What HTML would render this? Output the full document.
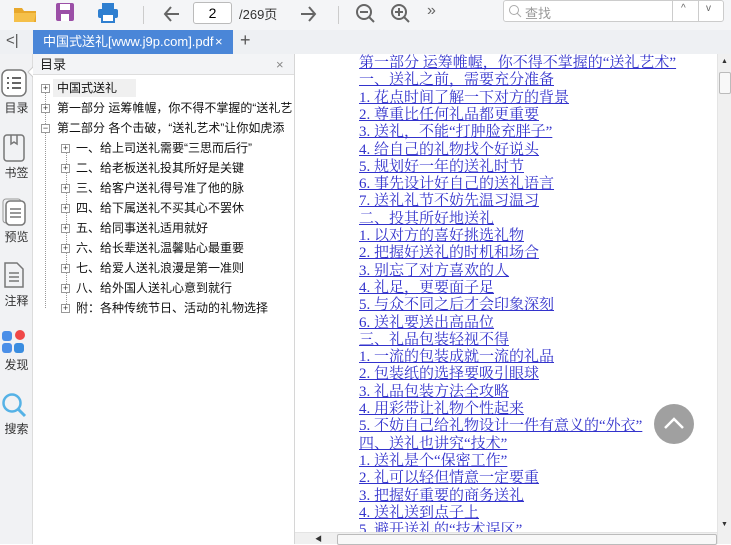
<!DOCTYPE html>
<html><head><meta charset="utf-8"><style>
*{margin:0;padding:0;box-sizing:border-box}
body{width:731px;height:544px;overflow:hidden;background:#fff;font-family:"Liberation Sans","Noto Sans CJK SC",sans-serif;position:relative}
.abs{position:absolute}
#tb{left:0;top:0;width:731px;height:30px;background:#f4f5f7}
#tabs{left:0;top:30px;width:731px;height:24px;background:#eef0f3}
#tab{left:33px;top:30px;width:200px;height:24px;background:#4a86d8;color:#fff;font-size:13px;line-height:24px;padding-left:10px}
#icons{left:0;top:54px;width:33px;height:490px;background:#f1f2f4;border-right:1px solid #dcdcdc}
#side{left:33px;top:54px;width:262px;height:490px;background:#fff;border-right:1px solid #d6d6d6}
#sidehdr{left:0;top:0;width:261px;height:21px;background:#f3f4f6;border-bottom:1px solid #ddd;font-size:13px;line-height:21px;padding-left:7px;color:#222}
.it{position:absolute;font-size:12px;color:#111;white-space:nowrap;line-height:16px}
.pm{position:absolute;width:9px;height:9px;border:1px solid #999;background:#fff;font-size:9px;line-height:7px;text-align:center;color:#333}
#content{left:295px;top:54px;width:422px;height:478px;background:#fff;overflow:hidden}
.ln{position:absolute;left:64px;font-family:"Liberation Serif","Noto Serif CJK SC",serif;font-size:15px;color:#3333cc;text-decoration:underline;white-space:nowrap;line-height:17px}
.lbl{position:absolute;left:0;width:33px;text-align:center;font-size:12px;color:#333}
</style></head><body>
<div id="tb" class="abs">
 <svg class="abs" style="left:12px;top:2px" width="26" height="22"><path d="M2 6h8l2 3h12v11H2z" fill="#e8a82c"/><path d="M2 11h22l-2 9H2z" fill="#f5c04a"/></svg>
 <svg class="abs" style="left:55px;top:2px" width="20" height="20"><rect x="1" y="1" width="18" height="18" rx="2" fill="#9b4fa7"/><rect x="5" y="2" width="10" height="6" fill="#fff"/><rect x="6" y="12" width="8" height="7" fill="#fff"/></svg>
 <svg class="abs" style="left:96px;top:2px" width="24" height="22"><rect x="6" y="1" width="12" height="6" fill="#2f7fd0"/><rect x="2" y="7" width="20" height="9" rx="2" fill="#2f7fd0"/><rect x="6" y="12" width="12" height="8" fill="#fff" stroke="#2f7fd0" stroke-width="2"/></svg>
 <div class="abs" style="left:143px;top:6px;width:1px;height:18px;background:#ccc"></div>
 <svg class="abs" style="left:162px;top:4px" width="20" height="20"><path d="M17 10H3M9 3L3 10l6 7" stroke="#666" stroke-width="2" fill="none"/></svg>
 <div class="abs" style="left:193px;top:2px;width:39px;height:22px;border:1px solid #bbb;border-radius:3px;background:#fff;font-size:14px;line-height:20px;text-align:center">2</div>
 <div class="abs" style="left:239px;top:4px;font-size:13px;color:#333">/269页</div>
 <svg class="abs" style="left:298px;top:4px" width="20" height="20"><path d="M3 10h14M11 3l6 7-6 7" stroke="#666" stroke-width="2" fill="none"/></svg>
 <div class="abs" style="left:338px;top:6px;width:1px;height:18px;background:#ccc"></div>
 <svg class="abs" style="left:354px;top:2px" width="22" height="22"><circle cx="10" cy="10" r="7" stroke="#666" stroke-width="2" fill="none"/><path d="M6 10h8M15 15l5 5" stroke="#666" stroke-width="2"/></svg>
 <svg class="abs" style="left:389px;top:2px" width="22" height="22"><circle cx="10" cy="10" r="7" stroke="#666" stroke-width="2" fill="none"/><path d="M6 10h8M10 6v8M15 15l5 5" stroke="#666" stroke-width="2"/></svg>
 <div class="abs" style="left:427px;top:2px;font-size:16px;color:#666">»</div>
 <div class="abs" style="left:503px;top:0;width:221px;height:22px;border:1px solid #ccc;border-radius:3px;background:#fff"></div>
 <svg class="abs" style="left:508px;top:4px" width="14" height="14"><circle cx="6" cy="6" r="4.5" stroke="#aaa" fill="none"/><path d="M9 9l4 4" stroke="#aaa"/></svg>
 <div class="abs" style="left:525px;top:3px;font-size:13px;color:#999">查找</div>
 <div class="abs" style="left:672px;top:0;width:1px;height:22px;background:#ccc"></div>
 <div class="abs" style="left:698px;top:0;width:1px;height:22px;background:#ccc"></div>
 <div class="abs" style="left:681px;top:3px;font-size:10px;color:#666">^</div>
 <div class="abs" style="left:706px;top:3px;font-size:10px;color:#666">v</div>
</div>
<div id="tabs" class="abs"><div class="abs" style="left:6px;top:2px;font-size:15px;color:#555">&lt;|</div><div class="abs" style="left:240px;top:0px;font-size:18px;color:#555">+</div></div>
<div id="tab" class="abs">中国式送礼[www.j9p.com].pdf<span style="position:absolute;left:182px">×</span></div>
<div id="icons" class="abs">
 <svg class="abs" style="left:1px;top:15px" width="26" height="28"><rect x="1" y="1" width="24" height="26" rx="6" fill="#fff" stroke="#777" stroke-width="1.5"/><path d="M6 9h2M11 9h9M6 14h2M11 14h9M6 19h2M11 19h9" stroke="#666" stroke-width="2"/></svg>
 <div class="lbl" style="top:45px">目录</div>
 <svg class="abs" style="left:3px;top:80px" width="22" height="28"><rect x="1" y="1" width="20" height="26" rx="3" fill="none" stroke="#777" stroke-width="1.5"/><path d="M8 1v9l3-2 3 2V1" fill="none" stroke="#777" stroke-width="1.5"/></svg>
 <div class="lbl" style="top:110px">书签</div>
 <svg class="abs" style="left:2px;top:144px" width="24" height="28"><rect x="1" y="1" width="18" height="24" rx="3" fill="none" stroke="#999"/><rect x="4" y="3" width="19" height="24" rx="4" fill="#fff" stroke="#777" stroke-width="1.5"/><path d="M8 11h11M8 15h11M8 19h11" stroke="#777" stroke-width="1.5"/></svg>
 <div class="lbl" style="top:174px">预览</div>
 <svg class="abs" style="left:3px;top:207px" width="22" height="28"><path d="M2 2h12l6 6v18H2z" fill="none" stroke="#777" stroke-width="1.5"/><path d="M6 12h10M6 16h10M6 20h10" stroke="#777" stroke-width="1.5"/></svg>
 <div class="lbl" style="top:238px">注释</div>
 <svg class="abs" style="left:1px;top:274px" width="26" height="26"><rect x="1" y="3" width="10" height="10" rx="3" fill="#4b8fe8"/><circle cx="19" cy="7" r="5" fill="#f04848"/><rect x="1" y="15" width="10" height="10" rx="3" fill="#4b8fe8"/><rect x="13" y="15" width="10" height="10" rx="3" fill="#3a8de0"/></svg>
 <div class="lbl" style="top:302px">发现</div>
 <svg class="abs" style="left:1px;top:338px" width="28" height="28"><circle cx="11" cy="11" r="8.5" stroke="#55b2e6" stroke-width="2.5" fill="none"/><path d="M17 17l7 7" stroke="#55b2e6" stroke-width="3"/></svg>
 <div class="lbl" style="top:366px">搜索</div>
 <svg class="abs" style="left:27px;top:12px" width="8" height="16"><path d="M7 0L1 6l6 6" fill="#fff" stroke="#ccc"/></svg>
</div>
<div id="side" class="abs">
 <div id="sidehdr" class="abs">目录<span style="position:absolute;left:243px;color:#888">×</span></div>
 <div class="abs" style="left:12px;top:34px;width:0;height:220px;border-left:1px dotted #999"></div>
 <div class="abs" style="left:33px;top:94px;width:0;height:160px;border-left:1px dotted #999"></div>
 <div class="abs" style="left:20px;top:25px;width:83px;height:18px;background:#f0f0f0"></div>
 <div class="pm" style="left:8px;top:30px">+</div><div class="it" style="left:24px;top:26px">中国式送礼</div>
 <div class="pm" style="left:8px;top:50px">+</div><div class="it" style="left:24px;top:46px">第一部分 运筹帷幄，你不得不掌握的“送礼艺</div>
 <div class="pm" style="left:8px;top:70px">−</div><div class="it" style="left:24px;top:66px">第二部分 各个击破，“送礼艺术”让你如虎添</div>
 <div class="pm" style="left:28px;top:90px">+</div><div class="it" style="left:43px;top:86px">一、给上司送礼需要“三思而后行”</div>
 <div class="pm" style="left:28px;top:110px">+</div><div class="it" style="left:43px;top:106px">二、给老板送礼投其所好是关键</div>
 <div class="pm" style="left:28px;top:130px">+</div><div class="it" style="left:43px;top:126px">三、给客户送礼得号准了他的脉</div>
 <div class="pm" style="left:28px;top:150px">+</div><div class="it" style="left:43px;top:146px">四、给下属送礼不买其心不罢休</div>
 <div class="pm" style="left:28px;top:170px">+</div><div class="it" style="left:43px;top:166px">五、给同事送礼适用就好</div>
 <div class="pm" style="left:28px;top:190px">+</div><div class="it" style="left:43px;top:186px">六、给长辈送礼温馨贴心最重要</div>
 <div class="pm" style="left:28px;top:210px">+</div><div class="it" style="left:43px;top:206px">七、给爱人送礼浪漫是第一准则</div>
 <div class="pm" style="left:28px;top:230px">+</div><div class="it" style="left:43px;top:226px">八、给外国人送礼心意到就行</div>
 <div class="pm" style="left:28px;top:250px">+</div><div class="it" style="left:43px;top:246px">附：各种传统节日、活动的礼物选择</div>
</div>
<div id="content" class="abs">
<div class="ln" style="top:1px">第一部分 运筹帷幄，你不得不掌握的“送礼艺术”</div>
<div class="ln" style="top:18.3px">一、送礼之前，需要充分准备</div>
<div class="ln" style="top:35.6px">1. 花点时间了解一下对方的背景</div>
<div class="ln" style="top:52.9px">2. 尊重比任何礼品都更重要</div>
<div class="ln" style="top:70.2px">3. 送礼，不能“打肿脸充胖子”</div>
<div class="ln" style="top:87.5px">4. 给自己的礼物找个好说头</div>
<div class="ln" style="top:104.8px">5. 规划好一年的送礼时节</div>
<div class="ln" style="top:122.1px">6. 事先设计好自己的送礼语言</div>
<div class="ln" style="top:139.4px">7. 送礼礼节不妨先温习温习</div>
<div class="ln" style="top:156.7px">二、投其所好地送礼</div>
<div class="ln" style="top:174px">1. 以对方的喜好挑选礼物</div>
<div class="ln" style="top:191.3px">2. 把握好送礼的时机和场合</div>
<div class="ln" style="top:208.6px">3. 别忘了对方喜欢的人</div>
<div class="ln" style="top:225.9px">4. 礼足，更要面子足</div>
<div class="ln" style="top:243.2px">5. 与众不同之后才会印象深刻</div>
<div class="ln" style="top:260.5px">6. 送礼要送出高品位</div>
<div class="ln" style="top:277.8px">三、礼品包装轻视不得</div>
<div class="ln" style="top:295.1px">1. 一流的包装成就一流的礼品</div>
<div class="ln" style="top:312.4px">2. 包装纸的选择要吸引眼球</div>
<div class="ln" style="top:329.7px">3. 礼品包装方法全攻略</div>
<div class="ln" style="top:347px">4. 用彩带让礼物个性起来</div>
<div class="ln" style="top:364.3px">5. 不妨自己给礼物设计一件有意义的“外衣”</div>
<div class="ln" style="top:381.6px">四、送礼也讲究“技术”</div>
<div class="ln" style="top:398.9px">1. 送礼是个“保密工作”</div>
<div class="ln" style="top:416.2px">2. 礼可以轻但情意一定要重</div>
<div class="ln" style="top:433.5px">3. 把握好重要的商务送礼</div>
<div class="ln" style="top:450.8px">4. 送礼送到点子上</div>
<div class="ln" style="top:468.1px">5. 避开送礼的“技术误区”</div>
<svg class="abs" style="left:359px;top:350px" width="40" height="40"><circle cx="20" cy="20" r="20" fill="#a0a0a0"/><path d="M11 24l9-9 9 9" stroke="#fff" stroke-width="2.5" fill="none"/></svg>
</div>
<div class="abs" style="left:717px;top:54px;width:14px;height:490px;background:#f0f0f0;border-left:1px solid #e4e4e4">
 <div class="abs" style="left:3px;top:4px;font-size:7px;color:#333">▲</div>
 <div class="abs" style="left:1px;top:18px;width:12px;height:22px;background:#f8f8f8;border:1px solid #bbb;border-radius:2px"></div>
 <div class="abs" style="left:3px;top:467px;font-size:7px;color:#333">▼</div>
</div>
<div class="abs" style="left:295px;top:532px;width:422px;height:12px;background:#f0f0f0;border-top:1px solid #e4e4e4">
 <div class="abs" style="left:20px;top:1px;font-size:7px;color:#333">◀</div>
 <div class="abs" style="left:42px;top:1px;width:380px;height:11px;background:#f8f8f8;border:1px solid #bbb;border-radius:2px"></div>
</div>
</body></html>
